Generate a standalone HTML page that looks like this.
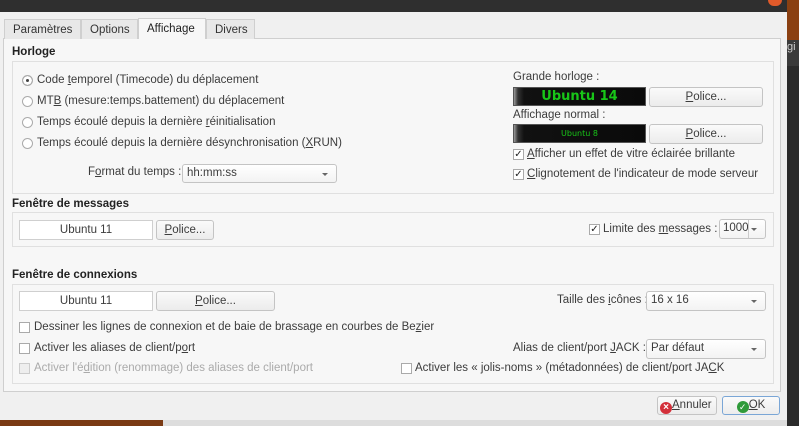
<!DOCTYPE html>
<html><head><meta charset="utf-8"><style>
*{box-sizing:border-box;margin:0;padding:0}
body{width:799px;height:426px;overflow:hidden;background:#2b2b2b;font-family:"Liberation Sans",sans-serif;font-size:11.5px;line-height:21px;color:#3c3c3c;position:relative}
.a{position:absolute;white-space:nowrap}
.title{left:0;top:0;width:787px;height:12px;background:#2f2f2f}
.dlg{left:0;top:12px;width:787px;height:408px;background:#f0f0f0}
.panel{left:3px;top:38px;width:778px;height:354px;background:#f7f7f7;border:1px solid #cfcfcf}
.grp{border:1px solid #e0e0e0;background:#f7f7f7}
.h{font-weight:bold;color:#222}
.tab{top:19px;height:20px;border:1px solid #cfcfcf;border-bottom:none;background:#e8e8e8;padding:0 8px;line-height:20px;color:#333}
.btn{border:1px solid #c4c4c4;border-radius:3px;background:linear-gradient(#fafafa,#ececec);text-align:center;height:20px;line-height:18px}
.fld{border:1px solid #cfcfcf;background:#fff;text-align:center;height:20px;line-height:18px}
.radio{width:11px;height:11px;border:1px solid #aaa;border-radius:50%;background:#fff}
.cb{width:11px;height:11px;border:1px solid #aaa;background:#fff;font-size:10px;line-height:9px;text-align:center;color:#222}
.combo{border:1px solid #c4c4c4;border-radius:3px;background:linear-gradient(#fff,#f3f3f3);height:19px;line-height:17px;padding-left:4px}
.combo:after{content:"";position:absolute;right:8px;top:8px;border:3px solid transparent;border-top:3px solid #666}
.lcd{background:linear-gradient(90deg,#999 0,#333 4px,#111 10px,#0a0a0a);border:1px solid #555;color:#18c618;text-align:center;font-family:"DejaVu Sans",sans-serif}
u{text-decoration:underline}
</style></head><body>
<div class="a title"></div>
<div class="a" style="left:787px;top:0;width:12px;height:40px;background:#8a4012"></div>
<div class="a" style="left:787px;top:40px;width:12px;height:26px;background:#3a3a3a;color:#ccc;font-size:11px;line-height:14px">gi</div>
<div class="a" style="left:768px;top:0;width:14px;height:6px;border-radius:0 0 7px 7px;background:#e05a2a"></div>
<div class="a" style="left:0;top:419px;width:163px;height:7px;background:#7a3a14"></div>
<div class="a" style="left:163px;top:419px;width:624px;height:7px;background:#ddd"></div>
<div class="a dlg"></div>
<div class="a panel"></div>
<div class="a tab" style="left:4px;width:77px">Paramètres</div>
<div class="a tab" style="left:81px;width:57px">Options</div>
<div class="a tab" style="left:138px;top:18px;height:21px;width:68px;background:#f7f7f7;color:#222">Affichage</div>
<div class="a tab" style="left:206px;width:49px">Divers</div>

<div class="a h" style="left:12px;top:42px">Horloge</div>
<div class="a grp" style="left:12px;top:61px;width:762px;height:133px"></div>
<div class="a radio" style="left:22px;top:75px;box-shadow:inset 0 0 0 3px #fff;background:#444"></div>
<div class="a" style="left:37px;top:70px">Code <u>t</u>emporel (Timecode) du déplacement</div>
<div class="a radio" style="left:22px;top:96px"></div>
<div class="a" style="left:37px;top:91px">MT<u>B</u> (mesure:temps.battement) du déplacement</div>
<div class="a radio" style="left:22px;top:117px"></div>
<div class="a" style="left:37px;top:112px">Temps écoulé depuis la dernière <u>r</u>éinitialisation</div>
<div class="a radio" style="left:22px;top:138px"></div>
<div class="a" style="left:37px;top:133px">Temps écoulé depuis la dernière désynchronisation (<u>X</u>RUN)</div>
<div class="a" style="left:88px;top:162px">F<u>o</u>rmat du temps :</div>
<div class="a combo" style="left:182px;top:164px;width:155px">hh:mm:ss</div>

<div class="a" style="left:513px;top:67px">Grande horloge :</div>
<div class="a lcd" style="left:513px;top:87px;width:133px;height:19px;font-size:13px;font-weight:bold;line-height:17px">Ubuntu 14</div>
<div class="a btn" style="left:649px;top:87px;width:114px"><u>P</u>olice...</div>
<div class="a" style="left:513px;top:105px">Affichage normal :</div>
<div class="a lcd" style="left:513px;top:124px;width:133px;height:19px;font-size:8px;line-height:17px">Ubuntu 8</div>
<div class="a btn" style="left:649px;top:124px;width:114px"><u>P</u>olice...</div>
<div class="a cb" style="left:513px;top:149px">✓</div>
<div class="a" style="left:527px;top:144px"><u>A</u>fficher un effet de vitre éclairée brillante</div>
<div class="a cb" style="left:513px;top:169px">✓</div>
<div class="a" style="left:527px;top:164px"><u>C</u>lignotement de l'indicateur de mode serveur</div>

<div class="a h" style="left:12px;top:194px">Fenêtre de messages</div>
<div class="a grp" style="left:12px;top:212px;width:762px;height:35px"></div>
<div class="a fld" style="left:19px;top:220px;width:134px">Ubuntu 11</div>
<div class="a btn" style="left:156px;top:220px;width:58px"><u>P</u>olice...</div>
<div class="a cb" style="left:589px;top:224px">✓</div>
<div class="a" style="left:603px;top:219px">Limite des <u>m</u>essages :</div>
<div class="a combo" style="left:719px;top:219px;width:47px;height:20px;padding-left:3px">1000</div>
<div class="a" style="left:748px;top:220px;width:1px;height:18px;background:#ccc"></div>

<div class="a h" style="left:12px;top:265px">Fenêtre de connexions</div>
<div class="a grp" style="left:12px;top:284px;width:762px;height:100px"></div>
<div class="a fld" style="left:19px;top:291px;width:134px">Ubuntu 11</div>
<div class="a btn" style="left:156px;top:291px;width:119px"><u>P</u>olice...</div>
<div class="a" style="left:557px;top:290px">Taille des <u>i</u>cônes :</div>
<div class="a combo" style="left:646px;top:291px;width:120px;height:20px">16 x 16</div>
<div class="a cb" style="left:19px;top:322px"></div>
<div class="a" style="left:34px;top:317px">Dessiner les lignes de connexion et de baie de brassage en courbes de Be<u>z</u>ier</div>
<div class="a cb" style="left:19px;top:343px"></div>
<div class="a" style="left:34px;top:338px">Activer les aliases de client/p<u>o</u>rt</div>
<div class="a" style="left:513px;top:338px">Alias de client/port <u>J</u>ACK :</div>
<div class="a combo" style="left:646px;top:339px;width:120px;height:20px">Par défaut</div>
<div class="a cb" style="left:19px;top:363px;border-color:#ccc;background:#eee"></div>
<div class="a" style="left:34px;top:358px;color:#aaa">Activer l'é<u>d</u>ition (renommage) des aliases de client/port</div>
<div class="a cb" style="left:401px;top:363px"></div>
<div class="a" style="left:415px;top:358px">Activer les « jolis-noms » (métadonnées) de client/port JA<u>C</u>K</div>

<div class="a btn" style="left:657px;top:396px;width:60px;height:19px;line-height:17px;text-align:left;padding-left:2px"><span style="display:inline-block;width:12px;height:12px;border-radius:50%;background:#d3303a;color:#fff;font-size:10px;line-height:12px;text-align:center;vertical-align:-2px;font-weight:bold">×</span><u>A</u>nnuler</div>
<div class="a btn" style="left:722px;top:396px;width:58px;height:19px;line-height:17px;border-color:#7aa6d6"><span style="display:inline-block;width:12px;height:12px;border-radius:50%;background:#2f9a3a;color:#fff;font-size:9px;line-height:12px;text-align:center;vertical-align:-2px">✓</span><u>O</u>K</div>
</body></html>
